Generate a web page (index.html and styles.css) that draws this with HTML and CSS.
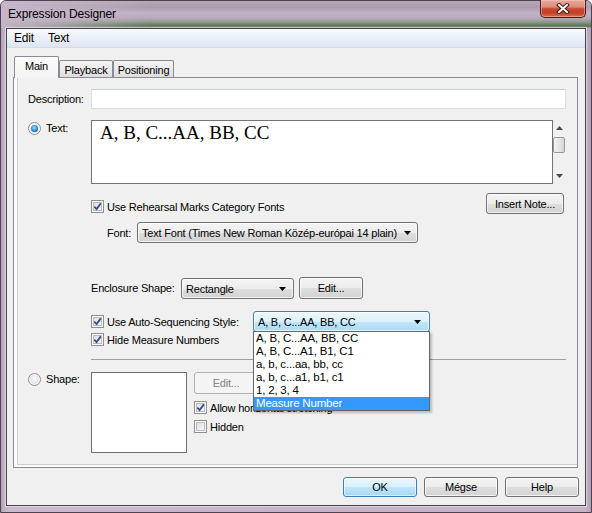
FILE: index.html
```html
<!DOCTYPE html>
<html>
<head>
<meta charset="utf-8">
<title>Expression Designer</title>
<link rel="stylesheet" href="styles.css">
</head>
<body>
<div class="window">
  <div class="titlebar">
    <div class="title">Expression Designer</div>
    <div class="close">
      <svg width="14" height="11" viewBox="0 0 14 11">
        <path d="M3 2 L11 9 M11 2 L3 9" stroke="#3a1712" stroke-width="4" stroke-linecap="square" fill="none"/>
        <path d="M3 2 L11 9 M11 2 L3 9" stroke="#ffffff" stroke-width="2" stroke-linecap="square" fill="none"/>
      </svg>
    </div>
  </div>
  <div class="client">
    <div class="menubar"><span class="menu">Edit</span><span class="menu">Text</span></div>
    <div class="tabs">
      <div class="tab active w-main">Main</div>
      <div class="tab w-play">Playback</div>
      <div class="tab w-pos">Positioning</div>
    </div>
    <div class="panel">
      <div class="row r-desc">
        <span class="side-label">Description:</span>
        <div class="input"></div>
      </div>
      <div class="row r-text">
        <div class="radio-wrap"><span class="radio on"></span><span>Text:</span></div>
        <div class="textbox">A, B, C...AA, BB, CC</div>
        <div class="vscroll">
          <div class="sarrow"><svg width="7" height="4" viewBox="0 0 7 4"><polygon points="0,4 7,4 3.5,0" fill="#4a4a4a"/></svg></div>
          <div class="thumb"></div>
          <div class="sfill"></div>
          <div class="sarrow"><svg width="7" height="4" viewBox="0 0 7 4"><polygon points="0,0 7,0 3.5,4" fill="#4a4a4a"/></svg></div>
        </div>
      </div>
      <div class="row r-rehearsal">
        <div class="check-row">
          <span class="cb"><svg width="9" height="9" viewBox="0 0 9 9"><path d="M1.3 4.6 L3.6 7 L7.8 1.4" fill="none" stroke="#3b4d8a" stroke-width="1.8"/></svg></span>
          <span>Use Rehearsal Marks Category Fonts</span>
        </div>
        <div class="btn btn-insert">Insert Note...</div>
      </div>
      <div class="row r-font">
        <span class="font-label">Font:</span>
        <div class="combo combo-font"><span>Text Font (Times New Roman Közép-európai 14 plain)</span><svg width="7" height="4" viewBox="0 0 7 4"><polygon points="0,0 7,0 3.5,4" fill="#000"/></svg></div>
      </div>
      <div class="row r-encl">
        <span class="encl-label">Enclosure Shape:</span>
        <div class="combo combo-encl"><span>Rectangle</span><svg width="7" height="4" viewBox="0 0 7 4"><polygon points="0,0 7,0 3.5,4" fill="#000"/></svg></div>
        <div class="btn btn-edit">Edit...</div>
      </div>
      <div class="row r-auto">
        <div class="check-row auto-label">
          <span class="cb"><svg width="9" height="9" viewBox="0 0 9 9"><path d="M1.3 4.6 L3.6 7 L7.8 1.4" fill="none" stroke="#3b4d8a" stroke-width="1.8"/></svg></span>
          <span>Use Auto-Sequencing Style:</span>
        </div>
        <div class="combo-wrap">
          <div class="combo combo-auto focus"><span>A, B, C...AA, BB, CC</span><svg width="7" height="4" viewBox="0 0 7 4"><polygon points="0,0 7,0 3.5,4" fill="#000"/></svg></div>
          <div class="dropdown-list">
            <div class="opt">A, B, C...AA, BB, CC</div>
            <div class="opt">A, B, C...A1, B1, C1</div>
            <div class="opt">a, b, c...aa, bb, cc</div>
            <div class="opt">a, b, c...a1, b1, c1</div>
            <div class="opt">1, 2, 3, 4</div>
            <div class="opt sel">Measure Number</div>
          </div>
        </div>
      </div>
      <div class="row r-hide">
        <div class="check-row">
          <span class="cb"><svg width="9" height="9" viewBox="0 0 9 9"><path d="M1.3 4.6 L3.6 7 L7.8 1.4" fill="none" stroke="#3b4d8a" stroke-width="1.8"/></svg></span>
          <span>Hide Measure Numbers</span>
        </div>
      </div>
      <div class="separator"></div>
      <div class="row r-shape">
        <div class="radio-wrap shape-radio"><span class="radio"></span><span>Shape:</span></div>
        <div class="shapebox"></div>
        <div class="shape-col">
          <div class="btn btn-edit disabled">Edit...</div>
          <div class="check-row allow">
            <span class="cb"><svg width="9" height="9" viewBox="0 0 9 9"><path d="M1.3 4.6 L3.6 7 L7.8 1.4" fill="none" stroke="#3b4d8a" stroke-width="1.8"/></svg></span>
            <span>Allow horizontal stretching</span>
          </div>
          <div class="check-row hidden-row">
            <span class="cb"></span>
            <span>Hidden</span>
          </div>
        </div>
      </div>
    </div>
    <div class="buttons">
      <div class="btn btn-bottom default">OK</div>
      <div class="btn btn-bottom">Mégse</div>
      <div class="btn btn-bottom">Help</div>
    </div>
  </div>
</div>
</body>
</html>
```
FILE: styles.css
```css
* { box-sizing: border-box; }
html, body { margin: 0; padding: 0; }
body {
  width: 592px;
  height: 513px;
  overflow: hidden;
  font-family: "Liberation Sans", Arial, sans-serif;
  font-size: 11px;
  letter-spacing: -0.2px;
  color: #000;
  background: #ffffff;
}
.window {
  width: 592px;
  height: 513px;
  display: flex;
  flex-direction: column;
  border: 1px solid #4d4350;
  border-radius: 6px 6px 0 0;
  background: linear-gradient(to right, #b6a3b9 0, #cab8cc 5px, #c7b4c9 50%, #c7b4c9 584px, #b3a0b6 100%);
}
.titlebar {
  height: 27px;
  display: flex;
  justify-content: space-between;
  align-items: flex-start;
  border-radius: 5px 5px 0 0;
  background:
    linear-gradient(to right, rgba(200,183,202,0.95) 0, rgba(200,183,202,0.7) 50px, rgba(200,183,202,0) 150px),
    linear-gradient(to bottom, #b6a8b8 0, #ab9caf 6px, #c3b1c6 12px, #baa9bd 17px, #8e9b8b 21px, #62795d 24px, #6c8366 26px, #a9b3a6 27px);
}
.title {
  padding: 5px 0 0 7px;
  font-size: 12px;
  line-height: 16px;
  letter-spacing: -0.15px;
  color: #000;
}
.close {
  width: 46px;
  height: 18px;
  margin: -1px 5px 0 0;
  border: 1px solid #4a1c16;
  border-top: none;
  border-radius: 0 0 5px 5px;
  background: linear-gradient(to bottom, #e8a899 0, #dc8e7e 40%, #c9482e 52%, #c24128 75%, #d7704f 100%);
  box-shadow: inset 0 0 0 1px rgba(255,210,200,0.45);
  display: flex;
  align-items: center;
  justify-content: center;
}
.client {
  height: 478px;
  margin: 0 5px 0 5px;
  border: 1px solid #45424a;
  box-shadow: 0 0 0 1px rgba(255,255,255,0.45);
  background: #f0f0f0;
  display: flex;
  flex-direction: column;
}
.menubar {
  height: 19px;
  padding: 1px 0 0 0;
  display: flex;
  background: linear-gradient(to bottom, #f8fafd 0, #e9eef7 60%, #dde5f2 100%);
  border-bottom: 1px solid #d7dbe3;
  font-size: 12px;
  line-height: 17px;
  letter-spacing: -0.2px;
}
.menu { padding: 0 7px; }
.tabs {
  margin-top: 8px;
  height: 21px;
  padding-left: 7px;
  display: flex;
  align-items: flex-end;
  position: relative;
  z-index: 2;
}
.tab {
  height: 17px;
  border: 1px solid #898c95;
  border-bottom: none;
  border-radius: 2px 2px 0 0;
  background: linear-gradient(to bottom, #f3f3f3 0, #ebebeb 50%, #dedede 100%);
  display: flex;
  align-items: center;
  justify-content: center;
  padding-top: 1px;
}
.tab.active {
  height: 22px;
  margin-bottom: -1px;
  background: linear-gradient(to bottom, #fcfcfc 0, #f3f3f3 100%);
  padding-top: 0;
  padding-bottom: 3px;
}
.w-main { width: 45px; }
.w-play { width: 54px; }
.w-pos { width: 61px; }
.panel {
  margin-left: 6px;
  width: 565px;
  height: 391px;
  border: 1px solid #898c95;
  background: #f0f0f0;
  box-shadow: inset 3px -2px 0 #fbfbfb, inset 4px -3px 0 #cdcdcd;
  padding-top: 11px;
  position: relative;
}
.row { display: flex; }
.r-desc { align-items: center; height: 20px; }
.side-label { width: 77px; padding-left: 14px; }
.input {
  width: 475px;
  height: 20px;
  background: #fff;
  border: 1px solid #d9dfe7;
  border-top-color: #c9cfd8;
}
.r-text { margin-top: 11px; align-items: flex-start; }
.radio-wrap {
  width: 77px;
  padding-left: 14px;
  margin-top: 1px;
  height: 14px;
  display: flex;
  align-items: center;
  gap: 5px;
}
.radio {
  width: 13px;
  height: 13px;
  border-radius: 50%;
  border: 1px solid #8e8f8f;
  background: radial-gradient(circle at 50% 40%, #fafafa 0, #e2e2e2 60%, #cfcfcf 100%);
  box-shadow: inset 0 0 0 1px #ffffff;
  display: flex;
  align-items: center;
  justify-content: center;
}
.radio.on::after {
  content: "";
  width: 7px;
  height: 7px;
  border-radius: 50%;
  background: radial-gradient(circle at 45% 40%, #b8ecff 0, #47a6ea 35%, #1a5fb8 75%, #123f80 100%);
}
.textbox {
  width: 462px;
  height: 64px;
  border: 1px solid #737373;
  background: #fff;
  font-family: "Liberation Serif", "Times New Roman", serif;
  font-size: 19px;
  letter-spacing: 0;
  line-height: 22px;
  padding: 1px 0 0 8px;
}
.vscroll {
  width: 13px;
  height: 64px;
  display: flex;
  flex-direction: column;
  background: #f0f0f0;
}
.sarrow {
  height: 16px;
  display: flex;
  align-items: center;
  justify-content: center;
}
.thumb {
  margin-top: 1px;
  width: 12px;
  height: 16px;
  border: 1px solid #979797;
  border-radius: 2px;
  background: linear-gradient(to right, #f3f3f3 0, #e6e6e6 50%, #d6d6d6 100%);
}
.sfill { flex: 1; }
.r-rehearsal {
  margin-top: 9px;
  margin-left: 77px;
  width: 473px;
  height: 21px;
  justify-content: space-between;
  align-items: flex-end;
}
.check-row {
  display: flex;
  align-items: center;
  gap: 3px;
  height: 13px;
}
.r-rehearsal .check-row { margin-bottom: 1px; }
.cb {
  width: 13px;
  height: 13px;
  border: 1px solid #8e8f8f;
  background: linear-gradient(135deg, #d6d9dd 0, #eef0f2 60%, #fcfcfc 100%);
  box-shadow: inset 0 0 0 1px #ffffff, inset 0 0 0 2px #b7bcc2;
  display: flex;
  align-items: center;
  justify-content: center;
  flex: none;
}
.btn {
  height: 21px;
  border: 1px solid #707070;
  border-radius: 3px;
  background: linear-gradient(to bottom, #f4f4f4 0, #ececec 50%, #dfdfdf 51%, #d2d2d2 100%);
  box-shadow: inset 0 0 0 1px rgba(255,255,255,0.75);
  display: flex;
  align-items: center;
  justify-content: center;
  flex: none;
}
.btn-insert { width: 78px; }
.r-font {
  margin-top: 8px;
  margin-left: 93px;
  align-items: center;
  height: 21px;
}
.font-label { width: 30px; }
.combo {
  height: 21px;
  border: 1px solid #707070;
  border-radius: 3px;
  background: linear-gradient(to bottom, #f4f4f4 0, #ececec 50%, #dfdfdf 51%, #d2d2d2 100%);
  box-shadow: inset 0 0 0 1px rgba(255,255,255,0.75);
  display: flex;
  align-items: center;
  justify-content: space-between;
  padding: 0 6px 0 4px;
  white-space: nowrap;
  flex: none;
}
.combo svg { flex: none; }
.combo-font { width: 281px; }
.r-encl {
  margin-top: 34px;
  margin-left: 77px;
  height: 22px;
  align-items: flex-end;
}
.encl-label { width: 90px; align-self: center; }
.combo-encl { width: 113px; padding-right: 7px; }
.btn-edit { width: 64px; height: 22px; margin-left: 5px; }
.r-auto {
  margin-top: 12px;
  margin-left: 77px;
  height: 21px;
  align-items: center;
}
.auto-label { width: 162px; }
.combo-wrap { position: relative; width: 177px; height: 21px; }
.combo-auto { width: 177px; padding-right: 8px; }
.combo.focus {
  border-color: #3c7fb1;
  background: linear-gradient(to bottom, #ecf7fd 0, #dcf1fc 50%, #c3e7fb 51%, #abdaf4 100%);
}
.dropdown-list {
  position: absolute;
  left: 0;
  top: 20px;
  width: 177px;
  border: 1px solid #646464;
  background: #fff;
  z-index: 10;
  box-shadow: 2px 2px 2px rgba(0,0,0,0.22);
}
.opt {
  height: 13px;
  line-height: 13px;
  padding-left: 2px;
  white-space: nowrap;
  font-size: 11.5px;
}
.opt.sel { background: #3399ff; color: #fff; }
.r-hide { margin-top: 1px; margin-left: 77px; }
.separator {
  margin-top: 13px;
  margin-left: 77px;
  width: 475px;
  height: 1px;
  background: #a0a0a0;
}
.r-shape { margin-top: 12px; align-items: flex-start; }
.shape-radio { margin-top: 0; }
.shapebox {
  width: 96px;
  height: 81px;
  background: #fff;
  border: 1px solid #6f6f6f;
}
.shape-col {
  margin-left: 7px;
  display: flex;
  flex-direction: column;
}
.shape-col .btn-edit { margin-left: 0; }
.btn.disabled {
  border-color: #adb2b5;
  background: #f4f4f4;
  color: #838383;
  box-shadow: none;
}
.allow { margin-top: 7px; }
.hidden-row { margin-top: 6px; }
.buttons {
  margin-top: 9px;
  padding-right: 6px;
  display: flex;
  justify-content: flex-end;
  gap: 7px;
}
.btn-bottom { width: 74px; height: 20px; }
.btn.default {
  border-color: #3c7fb1;
  background: linear-gradient(to bottom, #eaf6fd 0, #d9f0fc 50%, #bee6fd 51%, #a7d9f5 100%);
  box-shadow: inset 0 0 0 1px rgba(255,255,255,0.6);
}
```
